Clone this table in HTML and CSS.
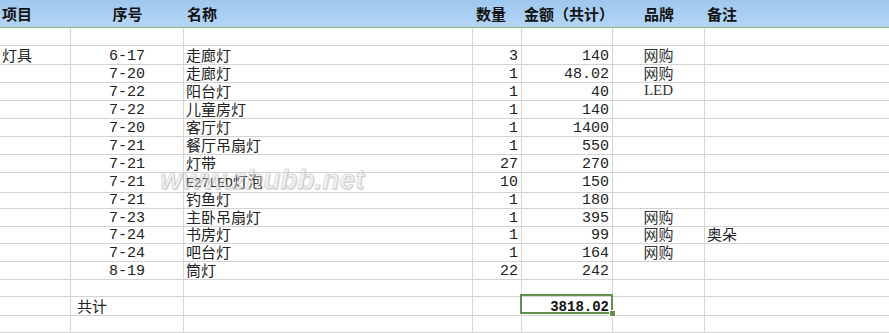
FILE: index.html
```html
<!DOCTYPE html>
<html lang="zh-CN">
<head>
<meta charset="utf-8">
<title>灯具清单</title>
<link rel="stylesheet" href="styles.css">
</head>
<body>
<div class="sheet">
  <div class="head">
    <div class="h-a">项目</div>
    <div class="h-b">序号</div>
    <div class="h-c">名称</div>
    <div class="h-d">数量</div>
    <div class="h-e">金额（共计）</div>
    <div class="h-f">品牌</div>
    <div class="h-g">备注</div>
  </div>

  <div class="row"><div></div><div></div><div></div><div></div><div></div><div></div><div></div></div>

  <div class="row"><div class="ca">灯具</div><div class="cb n">6-17</div><div class="cc">走廊灯</div><div class="cd n">3</div><div class="ce n">140</div><div class="cf">网购</div><div class="cg"></div></div>
  <div class="row"><div class="ca"></div><div class="cb n">7-20</div><div class="cc">走廊灯</div><div class="cd n">1</div><div class="ce n">48.02</div><div class="cf">网购</div><div class="cg"></div></div>
  <div class="row"><div class="ca"></div><div class="cb n">7-22</div><div class="cc">阳台灯</div><div class="cd n">1</div><div class="ce n">40</div><div class="cf latin">LED</div><div class="cg"></div></div>
  <div class="row"><div class="ca"></div><div class="cb n">7-22</div><div class="cc">儿童房灯</div><div class="cd n">1</div><div class="ce n">140</div><div class="cf"></div><div class="cg"></div></div>
  <div class="row"><div class="ca"></div><div class="cb n">7-20</div><div class="cc">客厅灯</div><div class="cd n">1</div><div class="ce n">1400</div><div class="cf"></div><div class="cg"></div></div>
  <div class="row"><div class="ca"></div><div class="cb n">7-21</div><div class="cc">餐厅吊扇灯</div><div class="cd n">1</div><div class="ce n">550</div><div class="cf"></div><div class="cg"></div></div>
  <div class="row"><div class="ca"></div><div class="cb n">7-21</div><div class="cc">灯带</div><div class="cd n">27</div><div class="ce n">270</div><div class="cf"></div><div class="cg"></div></div>
  <div class="row"><div class="ca"></div><div class="cb n">7-21</div><div class="cc"><span class="mono">E27LED</span>灯泡</div><div class="cd n">10</div><div class="ce n">150</div><div class="cf"></div><div class="cg"></div></div>
  <div class="row"><div class="ca"></div><div class="cb n">7-21</div><div class="cc">钓鱼灯</div><div class="cd n">1</div><div class="ce n">180</div><div class="cf"></div><div class="cg"></div></div>
  <div class="row short"><div class="ca"></div><div class="cb n">7-23</div><div class="cc">主卧吊扇灯</div><div class="cd n">1</div><div class="ce n">395</div><div class="cf">网购</div><div class="cg"></div></div>
  <div class="row"><div class="ca"></div><div class="cb n">7-24</div><div class="cc">书房灯</div><div class="cd n">1</div><div class="ce n">99</div><div class="cf">网购</div><div class="cg">奥朵</div></div>
  <div class="row"><div class="ca"></div><div class="cb n">7-24</div><div class="cc">吧台灯</div><div class="cd n">1</div><div class="ce n">164</div><div class="cf">网购</div><div class="cg"></div></div>
  <div class="row"><div class="ca"></div><div class="cb n">8-19</div><div class="cc">筒灯</div><div class="cd n">22</div><div class="ce n">242</div><div class="cf"></div><div class="cg"></div></div>

  <div class="row"><div></div><div></div><div></div><div></div><div></div><div></div><div></div></div>
  <div class="row"><div class="ca"></div><div class="cb total-label">共计</div><div class="cc"></div><div class="cd"></div><div class="ce n sel">3818.02</div><div class="cf"></div><div class="cg"></div></div>
  <div class="row"><div></div><div></div><div></div><div></div><div></div><div></div><div></div></div>
</div>
<div class="wm" aria-hidden="true">www.zhubb.net</div>
</body>
</html>
```

FILE: styles.css
```css
html, body {
  margin: 0;
  padding: 0;
}
body {
  width: 889px;
  height: 333px;
  overflow: hidden;
  background: #ffffff;
  position: relative;
  font-family: "Noto Sans CJK SC", "Noto Sans CJK TC", sans-serif;
  color: #222;
}
.sheet {
  --cols: 71px 113px 289px 49px 91px 92px 184px;
}
.head {
  display: grid;
  grid-template-columns: var(--cols);
  height: 28px;
  box-sizing: border-box;
  background: linear-gradient(#9fc7ee, #b4d6f5);
  border-bottom: 1px solid #86b982;
}
.head > div {
  font-size: 15px;
  font-weight: bold;
  line-height: 20px;
  padding-top: 4px;
  color: #111;
  white-space: nowrap;
}
.h-a { padding-left: 2px; }
.h-b { text-align: center; }
.h-c { padding-left: 3px; }
.h-d { padding-left: 3px; }
.h-e { padding-left: 2px; }
.h-f { text-align: center; }
.h-g { padding-left: 2px; }

.row {
  display: grid;
  grid-template-columns: var(--cols);
  height: 18px;
}
.row.short { height: 17px; }
.row > div {
  box-sizing: border-box;
  border-right: 1px solid #d6d6d6;
  border-bottom: 1px solid #d3d3d3;
  font-size: 15px;
  line-height: 17px;
  white-space: nowrap;
  min-width: 0;
}
.row > div:last-child { border-right: none; }
.ca { padding-left: 2px; }
.cb { text-align: center; }
.cc { padding-left: 2px; }
.cd { text-align: right; padding-right: 3px; }
.ce { text-align: right; padding-right: 3px; }
.cf { text-align: center; color: #333; }
.cg { padding-left: 2px; }
.n, .mono {
  font-family: "Liberation Mono", "DejaVu Sans Mono", monospace;
  font-size: 13px;
}
.row > .n {
  padding-top: 3px;
  line-height: 15px;
}
.latin {
  font-family: "Liberation Serif", serif;
  font-size: 14px;
}
.total-label {
  text-align: left;
  padding-left: 6px;
}
.row > .sel {
  position: relative;
  font-weight: bold;
  font-size: 14px;
  color: #111;
}
.sel::before {
  content: "";
  position: absolute;
  left: -2px;
  right: -1px;
  top: -3px;
  bottom: 1px;
  border: 2px solid #5e9248;
}
.sel::after {
  content: "";
  position: absolute;
  right: -4px;
  bottom: -2px;
  width: 5px;
  height: 5px;
  background: #5e9248;
  border: 1px solid #ffffff;
}
.wm {
  position: absolute;
  left: 160px;
  top: 164px;
  font-family: "Liberation Sans", sans-serif;
  font-weight: bold;
  font-style: italic;
  font-size: 28px;
  line-height: 32px;
  color: rgba(255, 255, 255, 0.35);
  -webkit-text-stroke: 1px rgba(160, 160, 160, 0.4);
  text-shadow: 1px 1px 1px rgba(120, 120, 120, 0.2);
  pointer-events: none;
}
```
